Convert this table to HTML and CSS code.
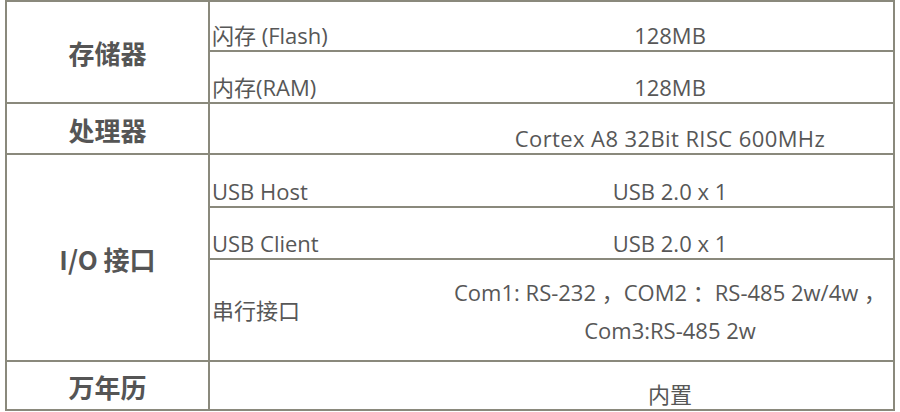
FILE: index.html
```html
<!DOCTYPE html>
<html lang="zh-CN">
<head>
<meta charset="utf-8">
<title>规格参数</title>
<link rel="stylesheet" href="styles.css">
</head>
<body>
<div class="spec">
  <div class="cat r-mem">存储器</div>
  <div class="label r1">闪存 (Flash)</div>
  <div class="val r1">128MB</div>
  <div class="label r2">内存(RAM)</div>
  <div class="val r2">128MB</div>

  <div class="cat r3">处理器</div>
  <div class="label r3"></div>
  <div class="val r3">Cortex A8 32Bit RISC 600MHz</div>

  <div class="cat r-io">I/O 接口</div>
  <div class="label r4">USB Host</div>
  <div class="val r4">USB 2.0 x 1</div>
  <div class="label r5">USB Client</div>
  <div class="val r5">USB 2.0 x 1</div>
  <div class="label r6 mid">串行接口</div>
  <div class="val r6 mid multi">Com1: RS-232 ，COM2 ：RS-485 2w/4w ，<br>Com3:RS-485 2w</div>

  <div class="cat r7">万年历</div>
  <div class="label r7"></div>
  <div class="val r7">内置</div>
</div>
</body>
</html>
```

FILE: styles.css
```css
html, body {
  margin: 0;
  padding: 0;
  background: #ffffff;
}

body {
  font-family: "Open Sans", "Noto Sans CJK SC", sans-serif;
  color: #575757;
}

.spec {
  display: grid;
  grid-template-columns: 203px 237px 448px;
  grid-template-rows: 50px 52px 51px 53px 52px 102px 49px;
  width: 890px;
  margin-left: 5px;
  border-top: 2px solid #8a897c;
  border-left: 2px solid #8a897c;
  box-sizing: border-box;
}

.spec > div {
  box-sizing: border-box;
  border-bottom: 2px solid #8a897c;
  display: flex;
  font-size: 22px;
  line-height: 30px;
}

.cat {
  grid-column: 1;
  border-right: 2px solid #8a897c;
  align-items: center;
  justify-content: center;
  font-family: "Noto Sans CJK SC", "Open Sans", sans-serif;
  font-weight: bold;
  font-size: 26px !important;
  color: #555555;
  padding-top: 2px;
}

.label {
  grid-column: 2;
  align-items: flex-end;
  padding-left: 2px;
}

.val {
  grid-column: 3;
  border-right: 2px solid #8a897c;
  align-items: flex-end;
  justify-content: center;
  text-align: center;
}

.r3.val {
  letter-spacing: 0.4px;
}

.mid {
  align-items: center;
}

.multi {
  line-height: 38px !important;
  padding-top: 2px;
}

.r-mem { grid-row: 1 / span 2; }
.r1 { grid-row: 1; }
.r2 { grid-row: 2; }
.r3 { grid-row: 3; }
.r-io { grid-row: 4 / span 3; }
.r4 { grid-row: 4; }
.r5 { grid-row: 5; }
.r6 { grid-row: 6; }
.r7 { grid-row: 7; }
```
